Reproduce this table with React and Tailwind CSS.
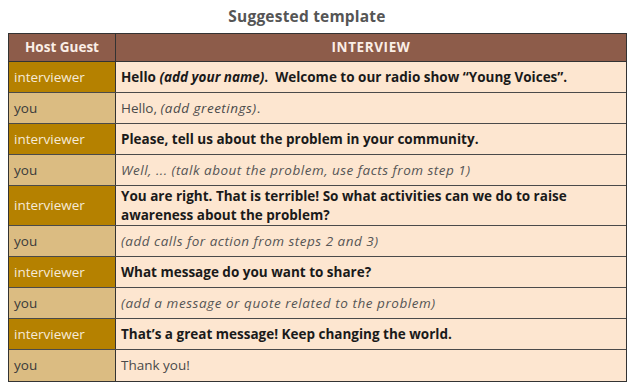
const rows = [
  { who: 'interviewer', text: <b>Hello <i>(add your name)</i>.&nbsp; Welcome to our radio show “Young Voices”.</b> },
  { who: 'you', text: <span className="text-[#4a4a4a]">Hello, <i className="tracking-[0.5px]">(add greetings)</i>.</span> },
  { who: 'interviewer', text: <b>Please, tell us about the problem in your community.</b> },
  { who: 'you', text: <i className="text-[#555] tracking-[0.5px]">Well, ... (talk about the problem, use facts from step 1)</i> },
  {
    who: 'interviewer',
    tall: true,
    text: <b>You are right. That is terrible! So what activities can we do to raise awareness about the problem?</b>,
  },
  { who: 'you', text: <i className="text-[#555] tracking-[0.5px]">(add calls for action from steps 2 and 3)</i> },
  { who: 'interviewer', text: <b>What message do you want to share?</b> },
  { who: 'you', text: <i className="text-[#555] tracking-[0.55px]">(add a message or quote related to the problem)</i> },
  { who: 'interviewer', text: <b>That’s a great message! Keep changing the world.</b> },
  { who: 'you', text: <span className="text-[#4a4a4a]">Thank you!</span> },
]

export default function App() {
  return (
    <div className="w-[640px] h-[386px] bg-white font-['Open_Sans',sans-serif] overflow-hidden">
      <div className="h-[33px] flex items-center justify-center pr-[26px]">
        <h2 className="text-[15.5px] font-bold text-[#555] tracking-[0.2px]">Suggested template</h2>
      </div>
      <div className="ml-[8px] w-[619px] border-[1.5px] border-[#333] bg-[#fde6d0]">
        <div className="flex h-[28px] bg-[#8d5c4a] text-[#fbeee6] text-[13.5px] font-bold border-b-[1.5px] border-[#333]">
          <div className="w-[107px] flex items-center justify-center border-r-[1.5px] border-[#333]">Host Guest</div>
          <div className="flex-1 flex items-center justify-center tracking-[0.6px]">INTERVIEW</div>
        </div>
        {rows.map((r, i) => (
          <div
            key={i}
            className={`flex text-[13.5px] leading-[19px] ${r.tall ? 'h-[40px]' : 'h-[31px]'} ${i < rows.length - 1 ? 'border-b-[1.5px] border-[#4a4a4a]' : ''}`}
          >
            <div
              className={`w-[107px] flex items-center px-[5px] border-r-[1.5px] border-[#333] ${
                r.who === 'you' ? 'bg-[#dbbc82] text-[#3a3a3a]' : 'bg-[#b58100] text-[#f6ead8]'
              }`}
            >
              {r.who}
            </div>
            <div className="flex-1 flex items-center px-[5px] text-[#1a1a1a]">
              <div>{r.text}</div>
            </div>
          </div>
        ))}
      </div>
    </div>
  )
}
